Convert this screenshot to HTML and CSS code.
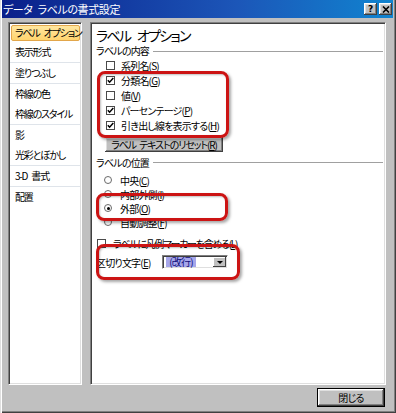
FILE: index.html
```html
<!DOCTYPE html>
<html lang="ja">
<head>
<meta charset="utf-8">
<title>データ ラベルの書式設定</title>
<link rel="stylesheet" href="styles.css">
</head>
<body>
<div class="window">
  <div class="titlebar">
    <span class="title">データ ラベルの書式設定</span>
    <div class="tbtns">
      <span class="tbtn help">?</span>
      <span class="tbtn"><svg width="8" height="7" viewBox="0 0 8 7"><path d="M1 0.5 L7 6.5 M7 0.5 L1 6.5" stroke="#000" stroke-width="1.6" fill="none"/></svg></span>
    </div>
  </div>
  <div class="content">
    <ul class="nav sunken">
      <li class="item sel">ラベル オプション</li>
      <li class="item">表示形式</li>
      <li class="sep"></li>
      <li class="item">塗りつぶし</li>
      <li class="sep"></li>
      <li class="item">枠線の色</li>
      <li class="item">枠線のスタイル</li>
      <li class="sep"></li>
      <li class="item">影</li>
      <li class="item">光彩とぼかし</li>
      <li class="sep"></li>
      <li class="item">3-D 書式</li>
      <li class="sep"></li>
      <li class="item">配置</li>
    </ul>
    <div class="pane sunken">
      <h1 class="heading">ラベル オプション</h1>
      <div class="group-title"><span>ラベルの内容</span><span class="rule"></span></div>
      <div class="checks">
        <div class="row"><span class="cb"></span><span>系列名(<u>S</u>)</span></div>
        <div class="row"><span class="cb on"><svg width="7" height="7" viewBox="0 0 7 7"><path d="M0.8 3.2 L2.6 5.2 L6.3 1" stroke="#000" stroke-width="1.5" fill="none"/></svg></span><span>分類名(<u>G</u>)</span></div>
        <div class="row"><span class="cb"></span><span>値(<u>V</u>)</span></div>
        <div class="row"><span class="cb on"><svg width="7" height="7" viewBox="0 0 7 7"><path d="M0.8 3.2 L2.6 5.2 L6.3 1" stroke="#000" stroke-width="1.5" fill="none"/></svg></span><span>パーセンテージ(<u>P</u>)</span></div>
        <div class="row"><span class="cb on"><svg width="7" height="7" viewBox="0 0 7 7"><path d="M0.8 3.2 L2.6 5.2 L6.3 1" stroke="#000" stroke-width="1.5" fill="none"/></svg></span><span>引き出し線を表示する(<u>H</u>)</span></div>
      </div>
      <button class="btn reset">ラベル テキストのリセット(<u>R</u>)</button>
      <div class="group-title second"><span>ラベルの位置</span><span class="rule"></span></div>
      <div class="radios">
        <div class="rrow"><span class="rb"></span><span>中央(<u>C</u>)</span></div>
        <div class="rrow"><span class="rb"></span><span>内部外側(<u>I</u>)</span></div>
        <div class="rrow"><span class="rb on"></span><span>外部(<u>O</u>)</span></div>
        <div class="rrow"><span class="rb"></span><span>自動調整(<u>F</u>)</span></div>
      </div>
      <div class="row legend"><span class="cb"></span><span>ラベルに凡例マーカーを含める(<u>L</u>)</span></div>
      <div class="seprow">
        <span class="seplabel">区切り文字(<u>E</u>)</span>
        <span class="combo"><span class="combo-val">(改行)</span><span class="combo-btn"><span class="tri"></span></span></span>
      </div>
      <div class="mark m1"></div>
      <div class="mark m2"></div>
      <div class="mark m3"></div>
    </div>
  </div>
  <div class="footer">
    <button class="btn default">閉じる</button>
  </div>
</div>
</body>
</html>
```

FILE: styles.css
```css
* {
  box-sizing: border-box;
  margin: 0;
  padding: 0;
}

html, body {
  width: 396px;
  height: 413px;
  overflow: hidden;
}

body {
  font-family: "Noto Sans CJK JP", "Noto Sans", sans-serif;
  font-size: 10px;
  font-feature-settings: "palt";
  letter-spacing: -0.8px;
  word-spacing: 3px;
  background: #c0c0c0;
  color: #000;
}

u {
  text-decoration: underline;
  text-underline-offset: 1px;
}

.window {
  width: 396px;
  height: 413px;
  padding: 0 3px 0 2px;
  display: flex;
  flex-direction: column;
  background: #c0c0c0;
  box-shadow: inset 1px 0 #dfdfdf, inset 2px 0 #ffffff, inset -1px -1px #404040, inset -2px -2px #808080;
}

.titlebar {
  height: 18px;
  flex: none;
  display: flex;
  align-items: center;
  justify-content: space-between;
  padding: 0 1px 0 1px;
  background: linear-gradient(90deg, #0a1f8a 0%, #1c56b8 60%, #1084d0 100%);
  color: #fff;
}

.title {
  font-size: 11px;
  line-height: 18px;
  letter-spacing: -0.4px;
  white-space: nowrap;
}

.tbtns {
  display: flex;
  gap: 2px;
}

.tbtn {
  width: 13px;
  height: 12px;
  display: flex;
  align-items: center;
  justify-content: center;
  background: #c0c0c0;
  color: #000;
  font-family: "DejaVu Sans", sans-serif;
  font-weight: bold;
  font-size: 9px;
  line-height: 12px;
  letter-spacing: 0;
  box-shadow: inset -1px -1px #404040, inset 1px 1px #ffffff, inset -2px -2px #808080, inset 2px 2px #dfdfdf;
}

.content {
  display: flex;
  gap: 8px;
  height: 367px;
  padding: 4px 7px 0 6px;
  flex: none;
}

.sunken {
  border: 1px solid;
  border-color: #808080 #ffffff #ffffff #808080;
  box-shadow: inset 1px 1px #404040, inset -1px -1px #dfdfdf;
  background: #fff;
}

.nav {
  width: 74px;
  height: 363px;
  list-style: none;
  padding: 1px;
  flex: none;
}

.item {
  height: 20px;
  line-height: 20px;
  padding-left: 5px;
  letter-spacing: -1.2px;
  white-space: nowrap;
}

.item.sel {
  height: 16px;
  line-height: 14px;
  margin: 1px 0 1px 1px;
  padding-left: 3px;
  border: 1px solid #e2a64a;
  border-radius: 2px;
  background: linear-gradient(#ffe7a0, #ffd46e);
}

.sep {
  height: 1px;
  background: #dfe4ea;
}

.pane {
  flex: 1;
  height: 363px;
  position: relative;
  padding: 4px 2px 0 5px;
}

.heading {
  font-size: 14px;
  font-weight: normal;
  line-height: 17px;
  letter-spacing: -1.7px;
  word-spacing: 5px;
  white-space: nowrap;
}

.group-title {
  display: flex;
  align-items: center;
  height: 14px;
  line-height: 14px;
  white-space: nowrap;
}

.group-title.second {
  margin-top: 4px;
  height: 13px;
  line-height: 13px;
}

.rule {
  flex: 1;
  height: 1px;
  margin-left: 4px;
  background: #a0a0a0;
}

.row {
  display: flex;
  align-items: center;
  height: 15px;
  padding-left: 10px;
  white-space: nowrap;
}

.cb {
  width: 9px;
  height: 9px;
  margin-right: 6px;
  flex: none;
  border: 1px solid #4a4a4a;
  background: #fff;
  display: flex;
  align-items: center;
  justify-content: center;
}

.btn {
  background: #c0c0c0;
  border: none;
  font: inherit;
  letter-spacing: inherit;
  word-spacing: inherit;
  color: #000;
  box-shadow: inset -1px -1px #404040, inset 1px 1px #ffffff, inset -2px -2px #808080, inset 2px 2px #dfdfdf;
  white-space: nowrap;
}

.reset {
  display: block;
  margin: 4px 0 0 9px;
  width: 118px;
  height: 15px;
  line-height: 13px;
  letter-spacing: -1.1px;
  word-spacing: 2px;
}

.radios {
  margin-top: 4px;
}

.rrow {
  display: flex;
  align-items: center;
  height: 14px;
  padding-left: 8px;
  white-space: nowrap;
}

.rb {
  width: 8px;
  height: 8px;
  margin-right: 8px;
  flex: none;
  border: 1px solid #6a6a6a;
  border-radius: 50%;
  background: #fff;
  display: flex;
  align-items: center;
  justify-content: center;
}

.rb.on::after {
  content: "";
  width: 3px;
  height: 3px;
  border-radius: 50%;
  background: #000;
}

.row.legend {
  margin-top: 7px;
  height: 14px;
  padding-left: 1px;
  letter-spacing: -1.3px;
}

.row.legend .cb {
  margin-right: 7px;
}

.seprow {
  display: flex;
  align-items: center;
  height: 16px;
  margin-top: 4px;
  white-space: nowrap;
}

.seplabel {
  width: 66px;
  flex: none;
}

.combo {
  width: 66px;
  height: 14px;
  display: flex;
  align-items: center;
  padding: 1px;
  border: 1px solid;
  border-color: #808080 #ffffff #ffffff #808080;
  box-shadow: inset 1px 1px #404040, inset -1px -1px #dfdfdf;
  background: #fff;
}

.combo-val {
  margin-left: 2px;
  width: 30px;
  height: 10px;
  line-height: 10px;
  background: #a6a6ea;
  color: #10107a;
  text-align: center;
}

.combo-btn {
  margin-left: auto;
  width: 13px;
  height: 10px;
  display: flex;
  align-items: center;
  justify-content: center;
  background: #c0c0c0;
  box-shadow: inset -1px -1px #404040, inset 1px 1px #ffffff;
}

.tri {
  width: 0;
  height: 0;
  border-left: 3px solid transparent;
  border-right: 3px solid transparent;
  border-top: 3px solid #000;
}

.mark {
  position: absolute;
  border: 3px solid #cc1414;
  border-radius: 8px;
  box-shadow: 2px 2px 3px rgba(0, 0, 0, 0.35), inset 1px 1px 2px rgba(0, 0, 0, 0.25);
}

.m1 {
  left: 6px;
  top: 48px;
  width: 132px;
  height: 67px;
}

.m2 {
  left: 5px;
  top: 170px;
  width: 132px;
  height: 28px;
}

.m3 {
  left: 5px;
  top: 221px;
  width: 144px;
  height: 36px;
}

.footer {
  display: flex;
  justify-content: flex-end;
  padding: 3px 8px 0 0;
}

.default {
  width: 68px;
  height: 19px;
  border: 1px solid #000;
  line-height: 15px;
}
```
